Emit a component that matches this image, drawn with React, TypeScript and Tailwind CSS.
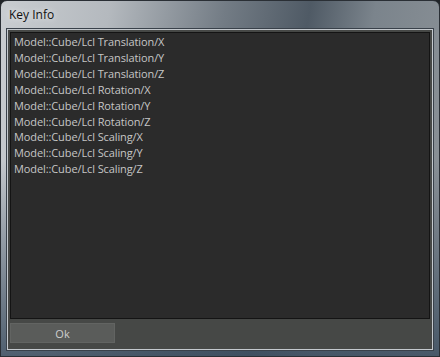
import React from "react"

const keys = [
  "Model::Cube/Lcl Translation/X",
  "Model::Cube/Lcl Translation/Y",
  "Model::Cube/Lcl Translation/Z",
  "Model::Cube/Lcl Rotation/X",
  "Model::Cube/Lcl Rotation/Y",
  "Model::Cube/Lcl Rotation/Z",
  "Model::Cube/Lcl Scaling/X",
  "Model::Cube/Lcl Scaling/Y",
  "Model::Cube/Lcl Scaling/Z",
]

export default function App() {
  return (
    <div className="w-[440px] h-[357px] bg-[#202428]">
      <div
        className="w-full h-full flex flex-col rounded-t-[7px] border border-[#2a2f35] px-[6px] pb-[6px] bg-[linear-gradient(180deg,rgba(60,78,96,0)_0%,rgba(60,78,96,0)_45%,rgba(60,78,96,0.85)_100%),linear-gradient(100deg,#c9cdd1_0%,#b4b9be_22%,#737c85_45%,#4f5a65_62%,#7b848c_75%,#8e9499_100%)]"
        style={{ fontFamily: '"Open Sans", "Noto Sans", sans-serif' }}
      >
        <div className="h-[28px] flex items-center pl-[2px] shrink-0">
          <span className="text-[12px] text-[#111] [text-shadow:0_0_6px_rgba(255,255,255,0.9)]">Key Info</span>
        </div>
        <div className="flex-1 flex flex-col border border-[#c4c9ce] bg-[#464846] p-[2px] shadow-[0_0_0_1px_#39414a]">
          <div className="flex-1 bg-[#2b2b2b] border border-[#141414] pl-[3px] pt-[1px] text-[11px] tracking-[-0.1px] leading-[15.9px] text-[#c6c6c6]">
            {keys.map((k) => (
              <div key={k}>{k}</div>
            ))}
          </div>
          <div className="h-[28px] flex items-center shrink-0">
            <button className="w-[105px] h-[20px] bg-[#5a5c5a] border border-[#626462] text-[11px] text-[#cfcfcf] leading-none">
              Ok
            </button>
          </div>
        </div>
      </div>
    </div>
  )
}
